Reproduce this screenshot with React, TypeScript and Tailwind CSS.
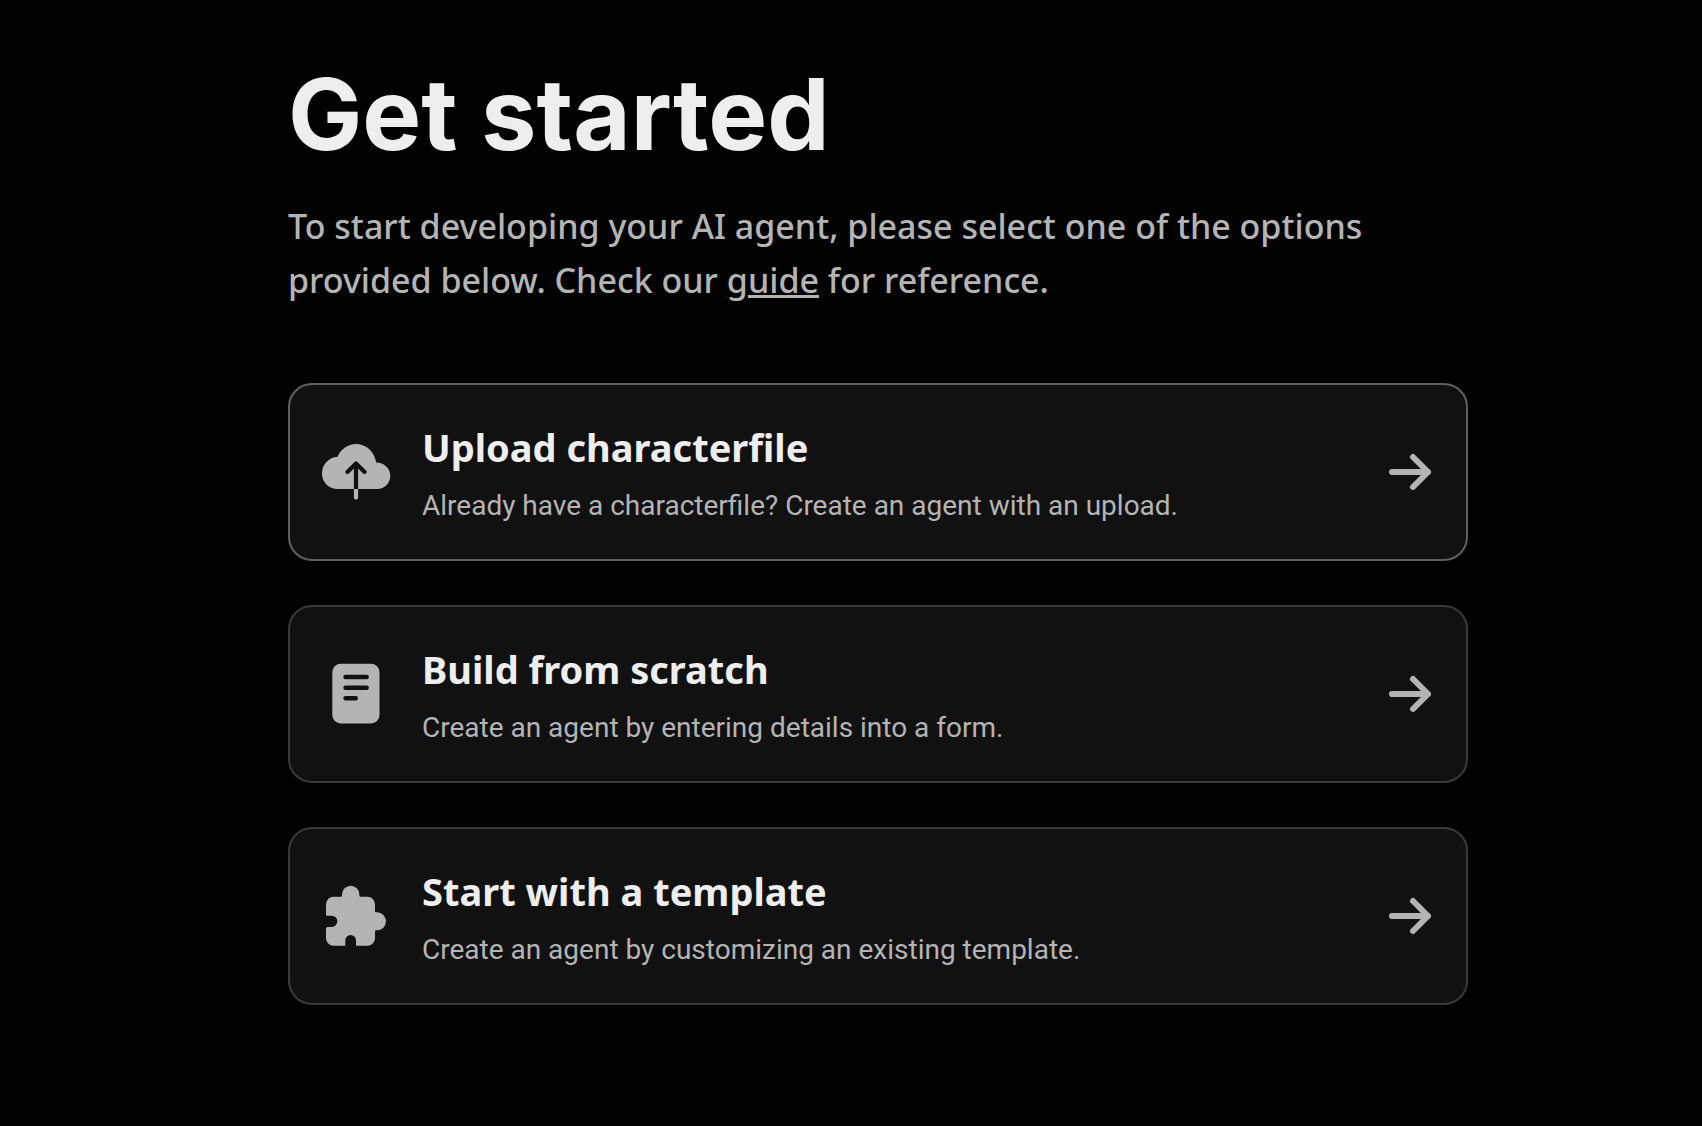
import type { ReactNode } from "react";

const CloudUploadIcon = () => (
  <svg viewBox="0 0 72 72" className="size-18 shrink-0" fill="none" aria-hidden="true">
    <path
      fill="#b4b4b4"
      d="M18 53C9 53 2 46.3 2 37.4C2 28.5 8.8 21.4 17.5 20.8C20.8 13.2 28 8 36 8C46.3 8 54.7 16 56.2 26.6C64 26.8 70.3 32.4 70.3 39.8C70.3 47.2 64.5 53 57.3 53Z"
    />
    <path stroke="#111111" strokeWidth="4.2" d="M36 28V53" />
    <path
      stroke="#111111"
      strokeWidth="4.2"
      strokeLinecap="round"
      strokeLinejoin="round"
      d="M27.4 36L36 27.4L44.6 36"
    />
    <path fill="#b4b4b4" d="M33.9 53H38.1V61.6a2.1 2.1 0 0 1-4.2 0Z" />
  </svg>
);

const DocumentIcon = () => (
  <svg viewBox="0 0 72 72" className="size-18 shrink-0" fill="none" aria-hidden="true">
    <rect x="12.3" y="5.8" width="47.2" height="59.6" rx="8.5" fill="#b4b4b4" />
    <path
      stroke="#111111"
      strokeWidth="4.4"
      strokeLinecap="round"
      d="M25.5 19H46.7M25.5 29.7H46.7M25.5 40.3H35.8"
    />
  </svg>
);

const PuzzleIcon = () => (
  <svg viewBox="0 0 72 72" className="size-18 shrink-0" aria-hidden="true">
    <path
      fill="#b4b4b4"
      d="M13.5 16.7H21a1 1 0 0 0 1-1V14.4a8.7 8.7 0 0 1 17.4 0V15.7a1 1 0 0 0 1 1H47.5A7.5 7.5 0 0 1 55 24.2V31.3a1 1 0 0 0 1 1H57a9 9 0 0 1 0 18H56a1 1 0 0 0-1 1V58.2A7.5 7.5 0 0 1 47.5 65.7H36.5a.5 .5 0 0 1-.5-.5V60.4a5.35 5.35 0 0 0-10.7 0V65.2a.5 .5 0 0 1-.5 .5H13.5A7.5 7.5 0 0 1 6 58.2V48.5A1.5 1.5 0 0 1 7.5 47H11.7a5.65 5.65 0 0 0 0-11.3H7A1 1 0 0 1 6 34.7V24.2A7.5 7.5 0 0 1 13.5 16.7Z"
    />
  </svg>
);

const ArrowIcon = () => (
  <svg viewBox="0 0 52 52" className="size-13 shrink-0" fill="none" aria-hidden="true">
    <path
      stroke="#b4b4b4"
      strokeWidth="6"
      strokeLinecap="round"
      strokeLinejoin="round"
      d="M8 26H44M29 11L44 26L29 41"
    />
  </svg>
);

type OptionCardProps = {
  icon: ReactNode;
  title: string;
  description: string;
  active?: boolean;
};

const OptionCard = ({ icon, title, description, active }: OptionCardProps) => (
  <button
    type="button"
    className={`flex w-full items-center gap-7.5 rounded-3xl border-2 bg-[#111111] px-7.5 py-[35px] text-left hover:border-[#606060] ${
      active ? "border-[#606060]" : "border-[#3a3a3a]"
    }`}
  >
    {icon}
    <span className="flex grow flex-col gap-3.5">
      <span className="text-[38px] leading-[54px] font-bold text-[#eeeeee]">
        {title}
      </span>
      <span className="font-['Roboto',sans-serif] text-[28px] leading-9 text-[#b4b4b4]">
        {description}
      </span>
    </span>
    <ArrowIcon />
  </button>
);

export default function App() {
  return (
    <main className="min-h-screen bg-black pt-16 pr-[234px] pb-16 pl-[288px] font-['Noto_Sans',sans-serif]">
      <h1 className="font-['Inter',sans-serif] text-[99px] leading-[100px] font-bold text-[#eeeeee]">
        Get started
      </h1>
      <p className="mt-[35px] max-w-[1120px] text-[34px] leading-[54px] font-medium text-[#b4b4b4]">
        To start developing your AI agent, please select one of the options
        provided below. Check our{" "}
        <a href="#guide" className="underline decoration-3 underline-offset-2">
          guide
        </a>{" "}
        for reference.
      </p>
      <div className="mt-19 flex flex-col gap-11">
        <OptionCard
          active
          icon={<CloudUploadIcon />}
          title="Upload characterfile"
          description="Already have a characterfile? Create an agent with an upload."
        />
        <OptionCard
          icon={<DocumentIcon />}
          title="Build from scratch"
          description="Create an agent by entering details into a form."
        />
        <OptionCard
          icon={<PuzzleIcon />}
          title="Start with a template"
          description="Create an agent by customizing an existing template."
        />
      </div>
    </main>
  );
}
